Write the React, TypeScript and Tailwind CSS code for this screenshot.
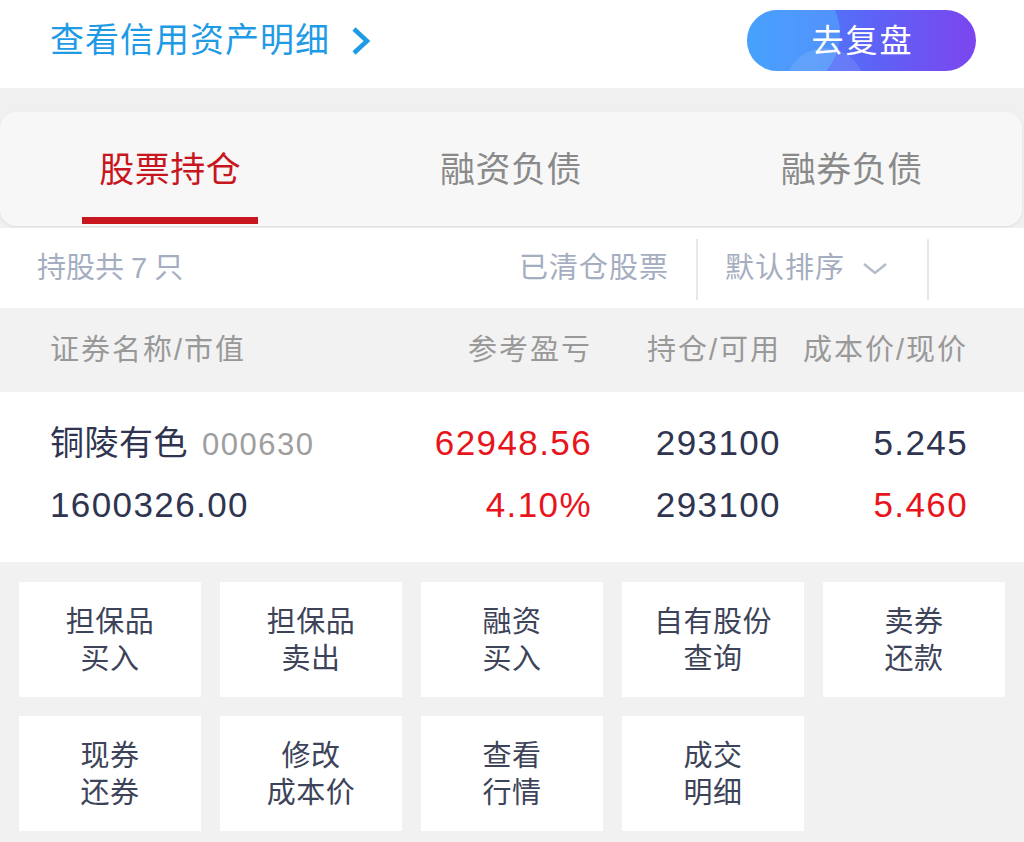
import React from "react";

const tools: string[][] = [
  ["担保品", "买入"],
  ["担保品", "卖出"],
  ["融资", "买入"],
  ["自有股份", "查询"],
  ["卖券", "还款"],
  ["现券", "还券"],
  ["修改", "成本价"],
  ["查看", "行情"],
  ["成交", "明细"],
];

const tabs = ["股票持仓", "融资负债", "融券负债"];

export default function App() {
  return (
    <div className="w-[1024px] h-[842px] overflow-hidden bg-[#f1f1f1] font-['Liberation_Sans','Noto_Sans_CJK_SC',sans-serif]">
      {/* top bar */}
      <div className="h-[88px] bg-white flex items-center justify-between pl-[50px] pr-[48px] pb-[7px]">
        <div className="flex items-center text-[#1f9be6] text-[34px] tracking-[1px]">
          <span>查看信用资产明细</span>
          <svg className="ml-[20px]" width="22" height="30" viewBox="0 0 22 30">
            <polyline points="4,3 17,15 4,27" fill="none" stroke="#1f9be6" strokeWidth="4.5" strokeLinejoin="miter" />
          </svg>
        </div>
        <div className="relative w-[229px] h-[61px] rounded-full overflow-hidden bg-[linear-gradient(90deg,#3d8ffb_0%,#5d63f6_55%,#7c45ef_100%)] flex items-center justify-center">
          <div className="absolute -left-[22px] -top-[34px] w-[115px] h-[115px] rounded-full bg-[#52b4ff]/50" />
          <div className="absolute left-[38px] top-[38px] w-[80px] h-[80px] rounded-full bg-white/10" />
          <span className="relative text-white text-[32px] tracking-[2px] pl-[2px]">去复盘</span>
        </div>
      </div>

      {/* tabs */}
      <div className="bg-[#f0f0f0] pt-[24px] pb-[2px]">
        <div className="h-[114px] mr-[2px] rounded-[16px] bg-[#f7f7f7] shadow-[0_1px_3px_rgba(0,0,0,0.08)] grid grid-cols-3">
          {tabs.map((t, i) => (
            <div key={t} className="flex flex-col items-center">
              <div className={`flex-1 flex items-center pt-[12px] text-[35px] tracking-[0.5px] ${i === 0 ? "text-[#c8161e]" : "text-[#8a8a8a]"}`}>
                {t}
              </div>
              <div className={`h-[7px] w-[176px] mb-[2px] ${i === 0 ? "bg-[#c8161e]" : "bg-transparent"}`} />
            </div>
          ))}
        </div>
      </div>

      {/* filter row */}
      <div className="h-[80px] bg-white flex items-center pt-[2px] text-[#a5aec0] text-[29px] tracking-[1px]">
        <div className="pl-[37px] flex-1 flex items-center tracking-normal">
          <span>持股共</span>
          <span className="ml-[7px] mr-[7px]">7</span>
          <span>只</span>
        </div>
        <div>已清仓股票</div>
        <div className="w-[2px] h-[61px] bg-[#e3e7ee] mx-[27px]" />
        <div>默认排序</div>
        <svg className="ml-[16px]" width="28" height="16" viewBox="0 0 28 16">
          <polyline points="3,3 14,12 25,3" fill="none" stroke="#b4bccb" strokeWidth="2.5" />
        </svg>
        <div className="w-[2px] h-[61px] bg-[#e3e7ee] ml-[38px] mr-[95px]" />
      </div>

      {/* header row */}
      <div className="h-[84px] bg-[#f2f2f2] flex items-center pt-[2px] pl-[50px] pr-[56px] text-[#999999] text-[29px] tracking-[2px]">
        <div className="w-[300px]">证券名称/市值</div>
        <div className="w-[242px] text-right">参考盈亏</div>
        <div className="w-[189px] text-right">持仓/可用</div>
        <div className="w-[187px] text-right">成本价/现价</div>
      </div>

      {/* data row */}
      <div className="bg-white pt-[20px] pb-[26px] pl-[50px] pr-[56px] text-[35px] tracking-[1.4px] text-[#2f3550]">
        <div className="h-[62px] flex items-center">
          <div className="w-[300px] flex items-baseline">
            <span className="text-[34px] tracking-[0.5px]">铜陵有色</span>
            <span className="ml-[14px] text-[31px] tracking-[1.5px] text-[#9e9e9e]">000630</span>
          </div>
          <div className="w-[242px] text-right text-[#e8141b]">62948.56</div>
          <div className="w-[189px] text-right">293100</div>
          <div className="w-[187px] text-right">5.245</div>
        </div>
        <div className="h-[62px] flex items-center">
          <div className="w-[300px]">1600326.00</div>
          <div className="w-[242px] text-right text-[#e8141b]">4.10%</div>
          <div className="w-[189px] text-right">293100</div>
          <div className="w-[187px] text-right text-[#e8141b]">5.460</div>
        </div>
      </div>

      {/* tool grid */}
      <div className="bg-[#f1f1f1] pt-[20px] px-[19px] pb-[11px] grid grid-cols-5 gap-[19px]">
        {tools.map((lines, i) => (
          <div key={i} className="h-[115px] bg-white flex flex-col items-center justify-center pt-[3px] text-[29px] leading-[37px] tracking-[0.5px] text-[#3d4359]">
            {lines.map((l) => (
              <div key={l}>{l}</div>
            ))}
          </div>
        ))}
      </div>
    </div>
  );
}
